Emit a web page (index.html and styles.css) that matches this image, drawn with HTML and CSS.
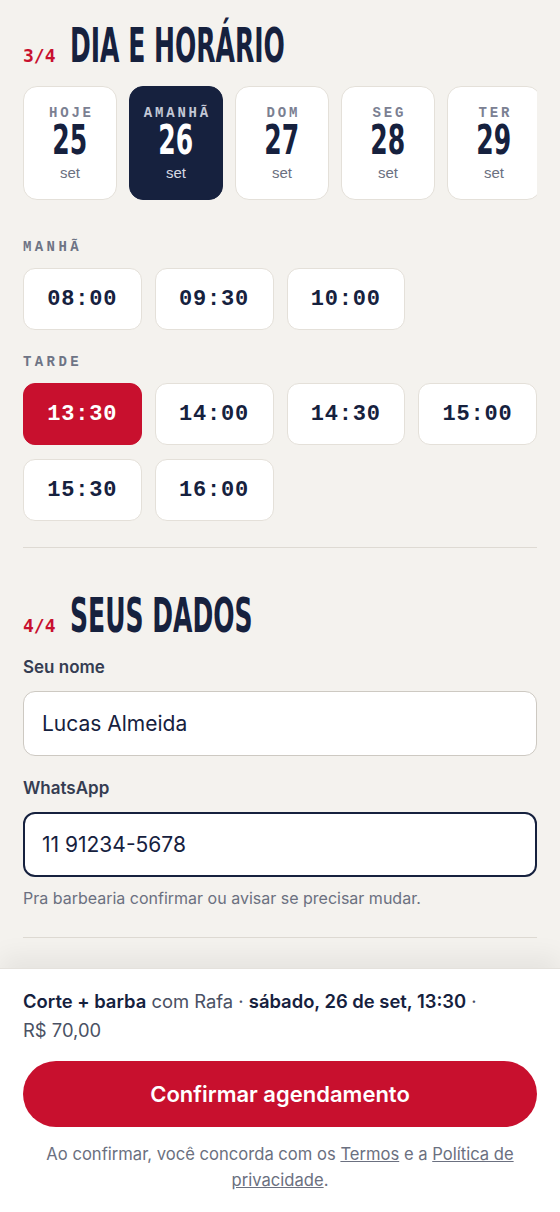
FILE: index.html
```html
<!DOCTYPE html>
<html lang="pt-BR">
<head>
    <meta charset="UTF-8">
    <meta name="viewport" content="width=device-width, initial-scale=1.0">
    <title>Agendamento</title>
    <link rel="stylesheet" href="styles.css">
</head>
<body>

<main class="page">
    <section class="step">
        <h2 class="step-title"><span class="step-num">3/4</span><span class="step-name">Dia e horário</span></h2>

        <div class="days">
            <button class="day"><span class="day-label">Hoje</span><span class="day-num">25</span><span class="day-month">set</span></button>
            <button class="day active"><span class="day-label">Amanhã</span><span class="day-num">26</span><span class="day-month">set</span></button>
            <button class="day"><span class="day-label">Dom</span><span class="day-num">27</span><span class="day-month">set</span></button>
            <button class="day"><span class="day-label">Seg</span><span class="day-num">28</span><span class="day-month">set</span></button>
            <button class="day"><span class="day-label">Ter</span><span class="day-num">29</span><span class="day-month">set</span></button>
        </div>

        <p class="period">Manhã</p>
        <div class="slots">
            <button class="slot">08:00</button>
            <button class="slot">09:30</button>
            <button class="slot">10:00</button>
        </div>

        <p class="period">Tarde</p>
        <div class="slots">
            <button class="slot active">13:30</button>
            <button class="slot">14:00</button>
            <button class="slot">14:30</button>
            <button class="slot">15:00</button>
            <button class="slot">15:30</button>
            <button class="slot">16:00</button>
        </div>
    </section>

    <hr class="divider">

    <section class="step">
        <h2 class="step-title"><span class="step-num">4/4</span><span class="step-name">Seus dados</span></h2>

        <label class="field-label" for="name">Seu nome</label>
        <input class="field" type="text" id="name" value="Lucas Almeida">

        <label class="field-label" for="phone">WhatsApp</label>
        <input class="field focused" type="tel" id="phone" value="11 91234-5678">
        <p class="hint">Pra barbearia confirmar ou avisar se precisar mudar.</p>
    </section>

    <hr class="divider">
</main>

<footer class="summary">
    <p class="summary-text"><strong>Corte + barba</strong> com Rafa · <strong>sábado, 26 de set, 13:30</strong> · R$&nbsp;70,00</p>
    <button class="confirm">Confirmar agendamento</button>
    <p class="legal">Ao confirmar, você concorda com os <a href="#">Termos</a> e a <a href="#">Política de privacidade</a>.</p>
</footer>

</body>
</html>
```

FILE: styles.css
```css
body, h2, p, button, input {
    margin: 0;
    padding: 0;
    box-sizing: border-box;
}

body {
    background-color: #f4f2ee;
    font-family: Inter, "Noto Sans", sans-serif;
    color: #16213e;
}

.page {
    padding: 18px 23px 0;
}

.step-title {
    display: flex;
    align-items: baseline;
    gap: 14px;
    height: 54px;
    line-height: 54px;
}

.step-num {
    font-family: "DejaVu Sans Mono", monospace;
    font-size: 18px;
    font-weight: bold;
    color: #c8102e;
}

.step-name {
    display: inline-block;
    font-family: "DejaVu Sans Condensed", sans-serif;
    font-size: 48px;
    font-weight: bold;
    text-transform: uppercase;
    color: #16213e;
    transform: scaleX(0.58);
    transform-origin: left;
}

.days {
    display: flex;
    gap: 12px;
    margin-top: 14px;
    width: 514px;
    overflow: hidden;
}

.day {
    flex: 0 0 94px;
    height: 114px;
    display: flex;
    flex-direction: column;
    align-items: center;
    padding-top: 18px;
    background: white;
    border: 1px solid #e4e0d9;
    border-radius: 14px;
    color: #16213e;
}

.day-label {
    font-family: "Liberation Mono", monospace;
    font-size: 14px;
    font-weight: bold;
    letter-spacing: 2.8px;
    margin-right: -2.8px;
    text-transform: uppercase;
    color: #7b8092;
    line-height: 16px;
}

.day-num {
    font-family: "DejaVu Sans Condensed", sans-serif;
    font-size: 41px;
    font-weight: bold;
    line-height: 38px;
    transform: scaleX(0.68);
}

.day-month {
    font-size: 15px;
    color: #6b7080;
    margin-top: 5px;
}

.day.active {
    background: #16213e;
    border-color: #16213e;
    color: white;
}

.day.active .day-label {
    color: #c3c8d6;
}

.day.active .day-month {
    color: #d6d9e2;
}

.period {
    font-family: "Liberation Mono", monospace;
    font-size: 14px;
    font-weight: bold;
    letter-spacing: 3.4px;
    text-transform: uppercase;
    color: #6e7485;
    margin: 38px 0 12px;
    line-height: 18px;
}

.slots + .period {
    margin-top: 23px;
}

.slots {
    display: grid;
    grid-template-columns: repeat(4, 1fr);
    gap: 14px 13px;
}

.slot {
    height: 62px;
    background: white;
    border: 1px solid #e4e0d9;
    border-radius: 12px;
    font-family: "Liberation Mono", monospace;
    font-size: 22px;
    font-weight: bold;
    letter-spacing: 0.8px;
    color: #16213e;
}

.slot.active {
    background: #c8102e;
    border-color: #c8102e;
    color: white;
}

.divider {
    border: none;
    border-top: 1px solid #dedad3;
    margin: 26px 0 0;
}

.step + .divider + .step .step-title {
    margin-top: 40px;
}

.field-label {
    display: block;
    font-size: 17px;
    font-weight: 600;
    color: #353d52;
    margin: 15px 0 14px;
}

.field {
    display: block;
    width: 100%;
    height: 65px;
    padding: 0 18px;
    background: white;
    border: 1px solid #cdc9c2;
    border-radius: 12px;
    font-family: Inter, "Noto Sans", sans-serif;
    font-size: 21px;
    color: #16213e;
}

.field + .field-label {
    margin-top: 22px;
}

.field.focused {
    border: 2px solid #16213e;
    padding-left: 17px;
}

.hint {
    font-size: 16px;
    color: #6b7080;
    margin: 11px 0 29px;
}

.summary {
    margin-top: 30px;
    background: white;
    border-top: 1px solid #e4e1dc;
    box-shadow: 0 -12px 24px rgba(0, 0, 0, 0.06);
    padding: 18px 23px 30px;
}

.summary-text {
    font-size: 18.4px;
    line-height: 29px;
    color: #4a5164;
}

.summary-text strong {
    color: #16213e;
    font-weight: 600;
}

.confirm {
    display: block;
    width: 100%;
    height: 66px;
    margin-top: 16px;
    background: #c8102e;
    border: none;
    border-radius: 33px;
    color: white;
    font-family: Inter, "Noto Sans", sans-serif;
    font-size: 22px;
    font-weight: 600;
}

.legal {
    margin-top: 14px;
    text-align: center;
    font-size: 16.6px;
    line-height: 26px;
    color: #6b7080;
}

.legal a {
    color: #6b7080;
}
```
